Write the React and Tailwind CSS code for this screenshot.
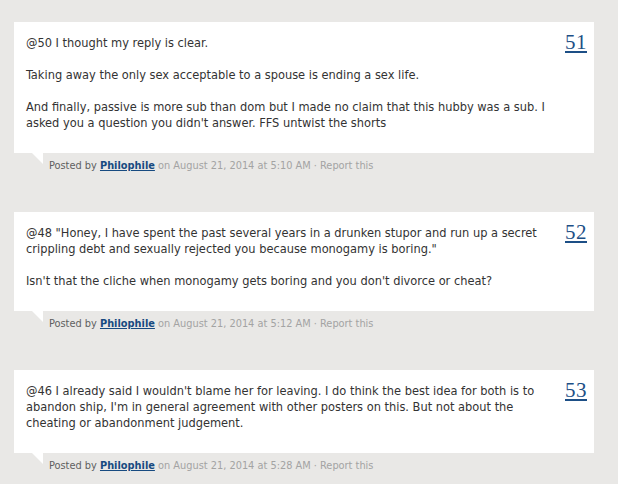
import React from "react";

const comments = [
  {
    num: 51,
    time: "5:10 AM",
    paragraphs: [
      "@50 I thought my reply is clear.",
      "Taking away the only sex acceptable to a spouse is ending a sex life.",
      "And finally, passive is more sub than dom but I made no claim that this hubby was a sub. I asked you a question you didn't answer. FFS untwist the shorts",
    ],
  },
  {
    num: 52,
    time: "5:12 AM",
    paragraphs: [
      '@48 "Honey, I have spent the past several years in a drunken stupor and run up a secret crippling debt and sexually rejected you because monogamy is boring."',
      "Isn't that the cliche when monogamy gets boring and you don't divorce or cheat?",
    ],
  },
  {
    num: 53,
    time: "5:28 AM",
    paragraphs: [
      "@46 I already said I wouldn't blame her for leaving. I do think the best idea for both is to abandon ship, I'm in general agreement with other posters on this. But not about the cheating or abandonment judgement.",
    ],
  },
];

function Comment({ c }) {
  return (
    <div>
      {/* comment body */}
      <div className="flex items-start bg-white pl-3 pr-[7px] pt-[6px] pb-[22px]">
        <div className="mt-[7px] w-[534px] space-y-4 text-[12.7px] leading-4 text-[#333]">
          {c.paragraphs.map((p, i) => (
            <p key={i}>{p}</p>
          ))}
        </div>
        <a
          href="#"
          className="ml-auto mt-[4px] font-['Liberation_Serif',serif] text-[21px] leading-5 tracking-[0.5px] text-[#1d4f86] underline underline-offset-2"
        >
          {c.num}
        </a>
      </div>

      {/* footer with speech tail */}
      <div className="relative h-[59px] pl-[35px] pt-[6px] text-[10.9px] leading-[14px]">
        <svg
          className="absolute left-[18px] top-0"
          width="11"
          height="11"
          viewBox="0 0 11 11"
        >
          <polygon points="0,0 11,0 11,11" fill="#ffffff" />
        </svg>
        <span className="text-[#5f5f5f]">Posted by </span>
        <a href="#" className="font-bold text-[#174a80] underline">
          Philophile
        </a>
        <span className="text-[#a3a3a3]"> on August 21, 2014 at {c.time}</span>
        <span className="text-[#a3a3a3]"> · </span>
        <a href="#" className="text-[#a3a3a3]">
          Report this
        </a>
      </div>
    </div>
  );
}

export default function App() {
  return (
    <div className="h-screen overflow-hidden bg-[#e9e8e6] pl-[14px] pt-[22px] font-['DejaVu_Sans_Condensed','DejaVu_Sans',sans-serif] font-stretch-condensed">
      <div className="w-[580px]">
        {comments.map((c) => (
          <Comment key={c.num} c={c} />
        ))}
      </div>
    </div>
  );
}
